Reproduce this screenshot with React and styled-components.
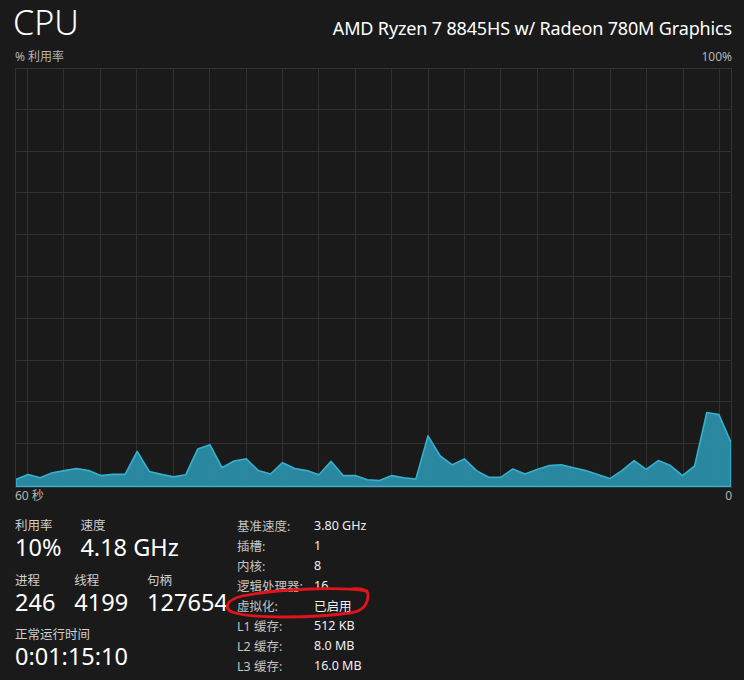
import React from 'react';
import styled, { createGlobalStyle } from 'styled-components';

const GlobalStyle = createGlobalStyle`
  body {
    margin: 0;
    background: #1a1a1a;
    font-family: 'Segoe UI', 'Noto Sans', 'Noto Sans CJK SC', sans-serif;
    color: #fff;
  }
`;

// one sample per second, oldest first
const CPU_HISTORY = [
  1.7, 2.9, 2.1, 3.3, 3.8, 4.3, 3.8, 2.6, 2.9, 2.9,
  8.4, 3.6, 2.9, 2.3, 2.8, 9.0, 10.0, 4.5, 6.1, 6.6,
  3.8, 3.0, 5.7, 4.3, 3.8, 2.8, 6.0, 2.6, 2.6, 1.6,
  1.4, 2.6, 2.1, 1.8, 12.1, 7.3, 5.2, 6.6, 3.8, 2.2,
  2.2, 4.2, 3.0, 4.1, 5.0, 5.2, 4.5, 3.8, 2.9, 1.9,
  3.8, 6.2, 4.1, 6.2, 5.0, 2.6, 4.9, 17.7, 17.2, 10.6,
];

const CHART_W = 715;
const CHART_H = 418;

const Page = styled.div`
  width: 744px;
  height: 680px;
  box-sizing: border-box;
  padding: 0 12px 0 15px;
  position: relative;
  overflow: hidden;
`;

const Header = styled.div`
  display: flex;
  justify-content: space-between;
  align-items: baseline;
  height: 46px;
`;

const Title = styled.div`
  font-size: 34px;
  font-weight: 300;
  margin-left: -2px;
  line-height: 44px;
`;

const Processor = styled.div`
  font-size: 18px;
  letter-spacing: -0.15px;
`;

const AxisRow = styled.div`
  display: flex;
  justify-content: space-between;
  font-size: 12px;
  line-height: 16px;
  color: #b4b4b4;
  height: ${props => props.h}px;
  align-items: ${props => (props.top ? 'flex-start' : 'center')};
`;

const ChartFrame = styled.div`
  border: 1px solid #333;
  height: ${CHART_H}px;
  background: #1a1a1a;
`;

const Stats = styled.div`
  display: grid;
  grid-template-columns: 221px 1fr;
  margin-top: 12px;
`;

const LeftStats = styled.div`
  display: flex;
  flex-direction: column;
  gap: 10.5px;
`;

const StatRow = styled.div`
  display: flex;
  gap: 19px;
`;

const Stat = styled.div`
  display: flex;
  flex-direction: column;
  min-width: ${props => props.minW || 0}px;
`;

const StatLabel = styled.span`
  font-size: 12.5px;
  line-height: 15px;
  color: #cfcfcf;
`;

const StatValue = styled.span`
  font-size: 23.5px;
  line-height: 29px;
  color: #fff;
  white-space: nowrap;
`;

const Specs = styled.div`
  display: grid;
  grid-template-columns: 77px auto;
  grid-auto-rows: 20px;
  align-items: center;
  font-size: 12.5px;
  margin-left: 1px;
  margin-top: -3px;
`;

const SpecLabel = styled.span`
  color: #c4c4c4;
`;

const SpecValue = styled.span`
  color: #f0f0f0;
`;

const Scribble = styled.svg`
  position: absolute;
  left: 222px;
  top: 584px;
  pointer-events: none;
`;

function UsageChart({ data }) {
  const step = CHART_W / (data.length - 1);
  const pts = data.map((v, i) => [i * step, CHART_H - 0.5 - (v / 100) * CHART_H]);
  const line = pts.map(([x, y]) => `${x.toFixed(1)},${y.toFixed(1)}`).join(' L');
  const area = `M0,${CHART_H - 0.5} L${line} L${CHART_W},${CHART_H - 0.5} Z`;

  const rows = Array.from({ length: 9 }, (_, k) => Math.round((k + 1) * 41.8) - 1.5);
  const cols = Array.from({ length: 20 }, (_, k) => Math.round(11 + k * 36.42) + 0.5);

  return (
    <svg width={CHART_W} height={CHART_H} viewBox={`0 0 ${CHART_W} ${CHART_H}`} style={{ display: 'block' }}>
      <g stroke="#313131" strokeWidth="1" shapeRendering="crispEdges">
        {rows.map(y => <line key={`r${y}`} x1="0" x2={CHART_W} y1={y} y2={y} />)}
        {cols.map(x => <line key={`c${x}`} x1={x} x2={x} y1="0" y2={CHART_H} />)}
      </g>
      <path d={area} fill="#2a8ea6" fillOpacity="0.95" stroke="#35b0cf" strokeWidth="1.6" strokeLinejoin="round" />
    </svg>
  );
}

const SPECS = [
  ['基准速度:', '3.80 GHz'],
  ['插槽:', '1'],
  ['内核:', '8'],
  ['逻辑处理器:', '16'],
  ['虚拟化:', '已启用'],
  ['L1 缓存:', '512 KB'],
  ['L2 缓存:', '8.0 MB'],
  ['L3 缓存:', '16.0 MB'],
];

export default function App() {
  return (
    <Page>
      <GlobalStyle />
      <Header>
        <Title>CPU</Title>
        <Processor>AMD Ryzen 7 8845HS w/ Radeon 780M Graphics</Processor>
      </Header>
      <AxisRow h={22}>
        <span>% 利用率</span>
        <span>100%</span>
      </AxisRow>
      <ChartFrame>
        <UsageChart data={CPU_HISTORY} />
      </ChartFrame>
      <AxisRow h={18} top>
        <span>60 秒</span>
        <span>0</span>
      </AxisRow>
      <Stats>
        <LeftStats>
          <StatRow>
            <Stat minW={46}>
              <StatLabel>利用率</StatLabel>
              <StatValue>10%</StatValue>
            </Stat>
            <Stat>
              <StatLabel>速度</StatLabel>
              <StatValue>4.18 GHz</StatValue>
            </Stat>
          </StatRow>
          <StatRow>
            <Stat>
              <StatLabel>进程</StatLabel>
              <StatValue>246</StatValue>
            </Stat>
            <Stat>
              <StatLabel>线程</StatLabel>
              <StatValue>4199</StatValue>
            </Stat>
            <Stat>
              <StatLabel>句柄</StatLabel>
              <StatValue>127654</StatValue>
            </Stat>
          </StatRow>
          <StatRow>
            <Stat>
              <StatLabel>正常运行时间</StatLabel>
              <StatValue>0:01:15:10</StatValue>
            </Stat>
          </StatRow>
        </LeftStats>
        <Specs>
          {SPECS.map(([k, v]) => (
            <React.Fragment key={k}>
              <SpecLabel>{k}</SpecLabel>
              <SpecValue>{v}</SpecValue>
            </React.Fragment>
          ))}
        </Specs>
      </Stats>
      <Scribble width="152" height="40" viewBox="0 0 152 40">
        <path
          d="M145,7 C120,3 60,4 20,12 C4,16 2,24 10,28 C30,35 90,34 128,29 C142,27 146,20 146,11 C146,6 140,4 130,5"
          fill="none"
          stroke="#e0141a"
          strokeWidth="2.8"
          strokeLinecap="round"
        />
      </Scribble>
    </Page>
  );
}
